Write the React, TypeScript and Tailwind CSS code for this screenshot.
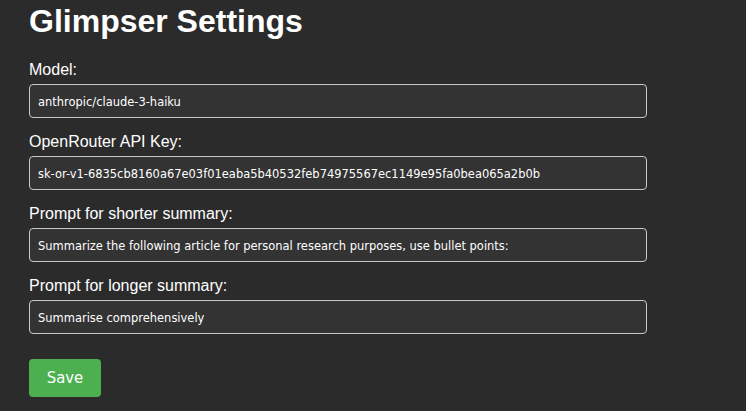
import React from "react";

const fields = [
  { label: "Model:", value: "anthropic/claude-3-haiku" },
  { label: "OpenRouter API Key:", value: "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" },
  { label: "Prompt for shorter summary:", value: "Summarize the following article for personal research purposes, use bullet points:" },
  { label: "Prompt for longer summary:", value: "Summarise comprehensively" },
];

const inputFont = { fontFamily: '"DejaVu Sans Condensed", "DejaVu Sans", sans-serif' };

export default function App() {
  return (
    <div className="min-h-[411px] w-full bg-[#2b2b2b] text-white pl-[29px] pt-[3px]" style={{ fontFamily: '"Liberation Sans", Arial, sans-serif' }}>
      <h1 className="text-[32px] leading-[37px] font-bold m-0 mb-[21px]">Glimpser Settings</h1>
      <div className="flex flex-col w-[618px]">
        {fields.map((f) => (
          <div key={f.label} className="flex flex-col mb-[15px]">
            <label className="text-[16px] leading-[18px] text-white mb-[5px]">{f.label}</label>
            <input
              readOnly
              value={f.value}
              className="h-[34px] w-full rounded-[4px] border border-[#c8c8c8] bg-[#333333] px-[8px] text-[12.75px] text-white outline-none"
              style={inputFont}
            />
          </div>
        ))}
      </div>
      <button
        className="mt-[10px] h-[38px] w-[72px] rounded-[4px] bg-[#4caf50] text-[16.5px] text-white"
        style={inputFont}
      >
        Save
      </button>
    </div>
  );
}
